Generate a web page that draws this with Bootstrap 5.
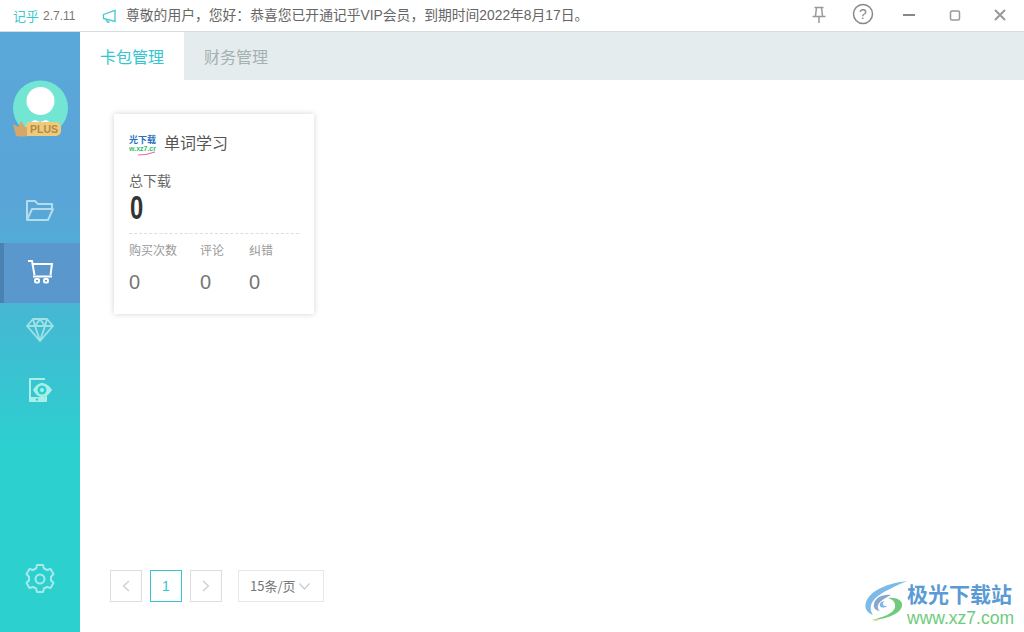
<!DOCTYPE html>
<html lang="zh-CN">
<head>
    <meta charset="UTF-8">
    <meta name="viewport" content="width=device-width, initial-scale=1.0">
    <link rel="stylesheet" href="https://cdn.jsdelivr.net/npm/bootstrap@5.3.2/dist/css/bootstrap.min.css">
    <title>记乎</title>
    <style>
        html, body { height: 632px; overflow: hidden; }
        body { font-family: "Noto Sans CJK SC", "Liberation Sans", sans-serif; color: #555; background: #fff; position: relative; }
        .lat { font-family: "Liberation Sans", "Noto Sans CJK SC", sans-serif; }
        .title-bar { height: 32px; border-bottom: 1px solid #d5dfdf; font-size: 12px; }
        .app-name { font-size: 13px; color: #3cc6d0; margin-left: 13px; width: 30px; }
        .app-ver { font-size: 12px; color: #777; width: 58px; }
        .notice { color: #666; margin-left: 9px; padding-top: 2px; font-size: 13.800px; white-space: nowrap; font-family: "Liberation Sans", "Noto Sans CJK SC", sans-serif; }
        .win-btns { margin-left: auto; }
        .win-btns svg { display: block; }
        .side-bar { width: 80px; height: 600px; background: linear-gradient(180deg, #5aa7d9 0, #5aa5d7 170px, #2bd0cf 420px, #2bd0cf 100%); }
        .avatar-wrap { height: 151px; position: relative; }
        .side-item { height: 60px; }
        .side-item.on { background: #5a97cd; box-shadow: inset 4px 0 0 #4a82b4; }
        .side-item svg, .avatar-wrap svg { display: block; }
        .gear-item { margin-bottom: 21px; }
        .plus-tag { position: absolute; left: 27px; top: 90px; width: 34px; height: 14px; border-radius: 0 5px 5px 0; background: #f0c979; color: #b08a4c; font-size: 10.500px; font-weight: 700; line-height: 14px; padding-left: 3px; font-family: "Liberation Sans", sans-serif; }
        .main-pane { width: 944px; height: 600px; }
        .tab-row { height: 48px; background: #e4ecee; }
        .tab-one { width: 104px; line-height: 48px; text-align: center; font-size: 16px; color: #a5b0b0; }
        .tab-one.on { background: #fff; color: #33c6d0; }
        .stat-card { width: 200px; height: 200px; margin: 34px 0 0 34px; background: #fff; box-shadow: 0 0 6px rgba(0, 0, 0, .18); padding: 14px 15px 15px; }
        .card-head { font-size: 16px; color: #555; height: 28px; }
        .logo-box { width: 28px; height: 28px; margin-right: 7px; overflow: hidden; }
        .total-label { font-size: 14px; color: #666; margin-top: 14px; line-height: 20px; }
        .total-num { font-family: "Liberation Sans", sans-serif; font-size: 33px; font-weight: 700; color: #333; line-height: 34px; margin-top: 1px; margin-left: 1px; transform: scaleX(.72); transform-origin: left; }
        .dash-line { border-top: 1px dashed #ddd; margin-top: 8px; padding-top: 7px; }
        .mini-stat { font-size: 12px; color: #999; line-height: 18px; }
        .mini-stat b { display: block; font-weight: 400; font-size: 20px; color: #777; line-height: 26px; margin-top: 10px; font-family: "Liberation Sans", sans-serif; }
        .ms-a { width: 71px; }
        .ms-b { width: 49px; }
        .pager-row { margin: auto 0 30px 30px; }
        .page-box { width: 32px; height: 32px; border: 1px solid #ddd; color: #ccc; font-size: 14px; margin-right: 8px; font-family: "Liberation Sans", sans-serif; }
        .page-box.on { border-color: #33c6d0; color: #33c6d0; }
        .size-box { width: 86px; height: 32px; border: 1px solid #e6e6e6; color: #777; font-size: 13px; margin-left: 8px; padding-left: 11px; }
        .size-box svg { margin-left: 3px; }
        .wm-logo { position: absolute; left: 864px; top: 578px; width: 160px; height: 50px; }
        .wm-logo svg { position: absolute; left: 0; top: 2px; }
        .wm-cn { position: absolute; left: 43px; top: 2px; font-size: 21px; font-weight: 700; color: #5b9bd5; line-height: 26px; white-space: nowrap; }
        .wm-en { position: absolute; left: 43px; top: 29px; font-size: 17.500px; color: #6ecb7d; line-height: 22px; white-space: nowrap; font-family: "Liberation Sans", sans-serif; }
    </style>
</head>
<body>
    <div class="title-bar d-flex align-items-center">
        <div class="app-name">记乎</div>
        <div class="app-ver lat">2.7.11</div>
        <svg width="16" height="16" viewBox="0 0 16 16" fill="none" stroke="#3fc8d2" stroke-width="1.300"><path d="M2.500 6.500 14 2.500v11L2.500 10.500zM5 11.500l1.500 2.500h2"/></svg>
        <div class="notice">尊敬的用户，您好：恭喜您已开通记乎VIP会员，到期时间2022年8月17日。</div>
        <div class="win-btns d-flex align-items-center">
            <svg width="212" height="32" viewBox="0 0 212 32" fill="none" stroke="#999" stroke-width="1.500">
                <path d="M2.500 7.500h9M4.500 7.500 3.500 16M9.500 7.500l1 8.500M.5 16.500h13M7 16.500v6.500"/>
                <circle cx="51" cy="14" r="9.500" stroke="#888"/>
                <text x="51" y="19" text-anchor="middle" font-size="14" fill="#888" stroke="none" font-family="Liberation Sans">?</text>
                <path d="M91 15h12" stroke="#888" stroke-width="2"/>
                <rect x="138.500" y="11" width="9" height="9" rx="1.500" stroke="#999"/>
                <path d="M183 10l10 10M193 10l-10 10" stroke="#999" stroke-width="2"/>
            </svg>
        </div>
    </div>
    <div class="d-flex">
        <div class="side-bar d-flex flex-column">
            <div class="avatar-wrap">
                <svg width="80" height="151" viewBox="0 0 80 151">
                    <circle cx="40.500" cy="76" r="27.500" fill="#72e6d3"/>
                    <circle cx="40.500" cy="69" r="14" fill="#fff"/>
                    <path d="M22 100c4-8 9-10 13-12l5 2 6-2c4 2 9 5 13 12l-18 4z" fill="#fff"/>
                    <path d="M13 92l5 3 3-6 4 6 4-2-1 11q-6 1-12 0z" fill="#d3a86a"/>
                </svg>
                <div class="plus-tag">PLUS</div>
            </div>
            <div class="side-item">
                <svg width="80" height="60" viewBox="0 0 80 60" fill="none" stroke="#b5dcec" stroke-width="2"><path d="M27 36V18h8l3 3h14v5M27 37l5-11h21l-5 11z" stroke-linejoin="round"/></svg>
            </div>
            <div class="side-item on">
                <svg width="80" height="60" viewBox="0 0 80 60" fill="none" stroke="#fff" stroke-width="2"><path d="M28 18h4l2.500 14M33 21h19l-1.500 11M33 33.500h19"/><rect x="35" y="36" width="4" height="3.500" rx="1"/><rect x="44" y="36" width="4" height="3.500" rx="1"/></svg>
            </div>
            <div class="side-item">
                <svg width="80" height="60" viewBox="0 0 80 60" fill="none" stroke="#9fe3e5" stroke-width="1.800" stroke-linejoin="round"><path d="M33 16h14l6 7-13 15-13-15zM27 23h26M35 23l5-7 5 7-5 15zM33 16l2 7M47 16l-2 7"/></svg>
            </div>
            <div class="side-item">
                <svg width="80" height="60" viewBox="0 0 80 60"><g transform="translate(-1 -4)"><path d="M30 27V20q0-1 1-1h15v2H32v6zM30 38h18v4q0 1-1 1H31q-1 0-1-1z" fill="#a8efe8"/><path d="M30 27h2v11h-2zM46 36h2v2h-2z" fill="#a8efe8"/><path d="M34 31c3-5 6-7 9-7s7 2 10 7c-3 5-7 7-10 7s-6-2-9-7z" fill="#a8efe8"/><circle cx="43" cy="31" r="4.500" fill="#2fcfcf"/><circle cx="43" cy="31" r="2" fill="#a8efe8"/><circle cx="38" cy="40.500" r="1.200" fill="#2fcfcf"/></g></svg>
            </div>
            <div class="side-item gear-item mt-auto">
                <svg width="80" height="56" viewBox="0 0 80 56" fill="none" stroke="#a8e9e8" stroke-width="2" stroke-linejoin="round"><circle cx="40" cy="28" r="4.500"/><path d="M37 14h6l1 3.500 3 1.500 3.500-1 3 5-2.500 2.700v3.600l2.500 2.700-3 5-3.500-1-3 1.500-1 3.500h-6l-1-3.500-3-1.500-3.500 1-3-5 2.500-2.700v-3.600l-2.500-2.700 3-5 3.500 1 3-1.500z"/></svg>
            </div>
        </div>
        <div class="main-pane d-flex flex-column">
            <div class="tab-row d-flex">
                <div class="tab-one on">卡包管理</div>
                <div class="tab-one">财务管理</div>
            </div>
            <div class="stat-card">
                <div class="card-head d-flex align-items-center">
                    <div class="logo-box">
                        <svg width="28" height="28" viewBox="0 0 28 28">
                            <text x="0" y="14" font-size="9" font-weight="700" fill="#2a70c0" font-family="Noto Sans CJK SC">光下载</text>
                            <text x="0" y="22" font-size="7" font-weight="700" fill="#2fbf6f" font-family="Liberation Sans">w.xz7.cr</text>
                            <path d="M9 26q9 0 17-3" stroke="#f06aa8" stroke-width="1.200" fill="none"/>
                        </svg>
                    </div>
                    <span>单词学习</span>
                </div>
                <div class="total-label">总下载</div>
                <div class="total-num">0</div>
                <div class="dash-line d-flex">
                    <div class="mini-stat ms-a">购买次数<b>0</b></div>
                    <div class="mini-stat ms-b">评论<b>0</b></div>
                    <div class="mini-stat">纠错<b>0</b></div>
                </div>
            </div>
            <div class="pager-row d-flex align-items-center">
                <div class="page-box d-flex align-items-center justify-content-center">
                    <svg width="8" height="12" viewBox="0 0 8 12" fill="none" stroke="#ccc" stroke-width="1.200"><path d="M7 1 1.500 6 7 11"/></svg>
                </div>
                <div class="page-box on d-flex align-items-center justify-content-center">1</div>
                <div class="page-box d-flex align-items-center justify-content-center">
                    <svg width="8" height="12" viewBox="0 0 8 12" fill="none" stroke="#ccc" stroke-width="1.200"><path d="M1 1l5.500 5L1 11"/></svg>
                </div>
                <div class="size-box d-flex align-items-center">
                    <span>15条/页</span>
                    <svg width="11" height="7" viewBox="0 0 11 7" fill="none" stroke="#ccc" stroke-width="1.200"><path d="M.5.5l5 5.500 5-5.500"/></svg>
                </div>
            </div>
        </div>
    </div>
    <div class="wm-logo">
        <svg width="44" height="44" viewBox="0 0 44 44" fill="none">
            <path d="M43 1C26 3 7 9 2 22c-2 6 1 11 7 13C5 29 6 22 14 16 22 10 32 6 43 1z" fill="#7cbbe8"/>
            <path d="M27 15c-9-1-16 3-17 9-1 4 2 7 6 7-3-2-3-6 0-9 3-3 7-5 11-7z" fill="#8aa6cf"/>
            <path d="M21 21c-4 0-6 3-5 5s5 2 7 0c-2 0-4 0-4-2s1-3 2-3z" fill="#7cbbe8"/>
            <path d="M24 18c8-1 15 2 14 8-1 7-14 13-30 14 12-3 22-7 23-13 1-5-3-8-7-9z" fill="#6ecb7d"/>
            <path d="M8 40c2 0 5-1 8-1l-3 2q-3 0-5-1z" fill="#e6d87a"/>
        </svg>
        <div class="wm-cn">极光下载站</div>
        <div class="wm-en">www.xz7.com</div>
    </div>
</body>
</html>
